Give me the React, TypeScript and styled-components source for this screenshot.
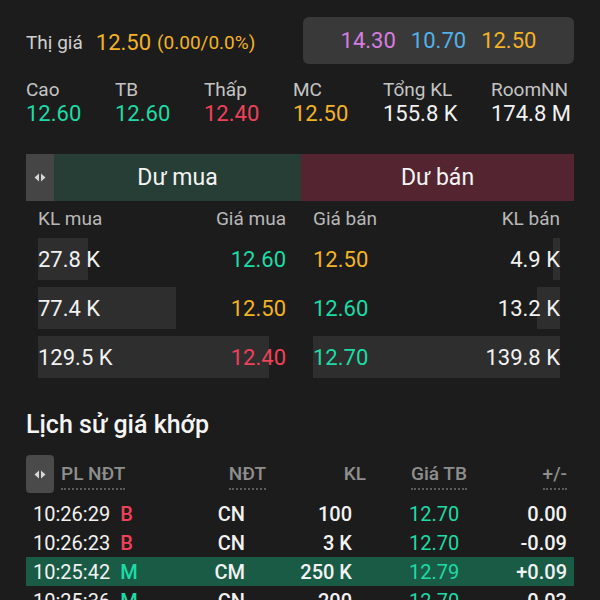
import React from "react";
import styled, { createGlobalStyle } from "styled-components";

const GREEN = "#1ddba6";
const RED = "#ef4159";
const YELLOW = "#f2b326";
const PURPLE = "#d67ee0";
const BLUE = "#52b1ea";
const WHITE = "#f2f2f2";

type Tone = "green" | "red" | "yellow" | "purple" | "blue" | "white";
const tones: Record<Tone, string> = {
	green: GREEN,
	red: RED,
	yellow: YELLOW,
	purple: PURPLE,
	blue: BLUE,
	white: WHITE,
};

const stats: { label: string; value: string; tone: Tone }[] = [
	{ label: "Cao", value: "12.60", tone: "green" },
	{ label: "TB", value: "12.60", tone: "green" },
	{ label: "Thấp", value: "12.40", tone: "red" },
	{ label: "MC", value: "12.50", tone: "yellow" },
	{ label: "Tổng KL", value: "155.8 K", tone: "white" },
	{ label: "RoomNN", value: "174.8 M", tone: "white" },
];

const bids = [
	{ vol: "27.8 K", price: "12.60", tone: "green" as Tone, bar: 50 },
	{ vol: "77.4 K", price: "12.50", tone: "yellow" as Tone, bar: 138 },
	{ vol: "129.5 K", price: "12.40", tone: "red" as Tone, bar: 231 },
];

const asks = [
	{ vol: "4.9 K", price: "12.50", tone: "yellow" as Tone, bar: 7 },
	{ vol: "13.2 K", price: "12.60", tone: "green" as Tone, bar: 23 },
	{ vol: "139.8 K", price: "12.70", tone: "green" as Tone, bar: 247 },
];

const trades = [
	{ time: "10:26:29", side: "B", who: "CN", vol: "100", avg: "12.70", diff: "0.00", hl: false },
	{ time: "10:26:23", side: "B", who: "CN", vol: "3 K", avg: "12.70", diff: "-0.09", hl: false },
	{ time: "10:25:42", side: "M", who: "CM", vol: "250 K", avg: "12.79", diff: "+0.09", hl: true },
	{ time: "10:25:36", side: "M", who: "CN", vol: "200", avg: "12.70", diff: "-0.03", hl: false },
];

function SwapIcon() {
	return (
		<svg width="12" height="9" viewBox="0 0 12 9">
			<path d="M5 0.5 L5 8.5 L0.5 4.5 Z" fill="#d6d6d6" />
			<path d="M7 0.5 L7 8.5 L11.5 4.5 Z" fill="#d6d6d6" />
		</svg>
	);
}

function App() {
	return (
		<>
			<GlobalStyle />
			<Page>
				<TopRow>
					<PriceLabel>Thị giá</PriceLabel>
					<Price>12.50</Price>
					<Change>(0.00/0.0%)</Change>
					<RefBox>
						<Num $tone="purple">14.30</Num>
						<Num $tone="blue">10.70</Num>
						<Num $tone="yellow">12.50</Num>
					</RefBox>
				</TopRow>

				<Stats>
					{stats.map((s) => (
						<Stat key={s.label}>
							<StatLabel>{s.label}</StatLabel>
							<Num $tone={s.tone}>{s.value}</Num>
						</Stat>
					))}
				</Stats>

				<Tabs>
					<TabToggle>
						<SwapIcon />
					</TabToggle>
					<Tab $side="buy">Dư mua</Tab>
					<Tab $side="sell">Dư bán</Tab>
				</Tabs>

				<Book>
					<BookHead>
						<span>KL mua</span>
						<span>Giá mua</span>
					</BookHead>
					<BookHead>
						<span>Giá bán</span>
						<span>KL bán</span>
					</BookHead>
					{bids.map((b, i) => (
						<React.Fragment key={b.vol}>
							<BookRow>
								<Bar $align="left" style={{ width: b.bar }} />
								<Cell>{b.vol}</Cell>
								<Cell $tone={b.tone}>{b.price}</Cell>
							</BookRow>
							<BookRow>
								<Bar $align="right" style={{ width: asks[i].bar }} />
								<Cell $tone={asks[i].tone}>{asks[i].price}</Cell>
								<Cell>{asks[i].vol}</Cell>
							</BookRow>
						</React.Fragment>
					))}
				</Book>

				<SectionTitle>Lịch sử giá khớp</SectionTitle>

				<HistHead>
					<HistToggle>
						<SwapIcon />
					</HistToggle>
					<HeadCell $dotted>PL NĐT</HeadCell>
					<HeadCell $dotted $right>NĐT</HeadCell>
					<HeadCell $right>KL</HeadCell>
					<HeadCell $dotted $pad={45}>Giá TB</HeadCell>
					<HeadCell $dotted $right>+/-</HeadCell>
				</HistHead>

				{trades.map((t) => (
					<TradeRow key={t.time} $hl={t.hl}>
						<TimeCell>
							{t.time}
							<Side $tone={t.side === "B" ? "red" : "green"}>{t.side}</Side>
						</TimeCell>
						<TradeCell $right $bold>{t.who}</TradeCell>
						<TradeCell $right $bold>{t.vol}</TradeCell>
						<TradeCell $tone="green" $pad={57}>{t.avg}</TradeCell>
						<TradeCell $right $bold>{t.diff}</TradeCell>
					</TradeRow>
				))}
			</Page>
		</>
	);
}

export default App;

const GlobalStyle = createGlobalStyle`
	html, body {
		margin: 0;
		background: #1c1c1c;
		height: 600px;
		overflow: hidden;
	}
	body {
		font-family: Roboto, "Noto Sans", sans-serif;
		color: ${WHITE};
	}
`;

const Page = styled.div`
	padding: 17px 26px 0;
	width: 548px;
`;

const TopRow = styled.div`
	display: flex;
	align-items: center;
	height: 47px;
`;

const PriceLabel = styled.span`
	font-size: 19px;
	color: #cfcfcf;
	margin-right: 13px;
	margin-top: 3px;
`;

const Price = styled.span`
	font-size: 22px;
	color: ${YELLOW};
	margin-right: 6px;
	margin-top: 3px;
`;

const Change = styled.span`
	font-size: 19px;
	color: ${YELLOW};
	margin-top: 4px;
`;

const RefBox = styled.div`
	margin-left: auto;
	width: 271px;
	height: 47px;
	box-sizing: border-box;
	border-radius: 6px;
	background: #393939;
	display: flex;
	align-items: center;
	justify-content: center;
	gap: 15px;
	font-size: 22px;
`;

const Num = styled.span<{ $tone: Tone }>`
	color: ${(p) => tones[p.$tone]};
`;

const Stats = styled.div`
	display: grid;
	grid-template-columns: 89px 89px 89px 90px 108px auto;
	margin-top: 15px;
	height: 75px;
`;

const Stat = styled.div`
	display: flex;
	flex-direction: column;
	font-size: 22px;
	line-height: 26px;
	white-space: nowrap;
`;

const StatLabel = styled.span`
	font-size: 19px;
	line-height: 22px;
	color: #c4c4c4;
`;

const Tabs = styled.div`
	display: grid;
	grid-template-columns: 28px 247px 1fr;
	height: 47px;
`;

const TabToggle = styled.div`
	background: #454545;
	display: flex;
	align-items: center;
	justify-content: center;
`;

const Tab = styled.div<{ $side: "buy" | "sell" }>`
	background: ${(p) => (p.$side === "buy" ? "#263e35" : "#552431")};
	display: flex;
	align-items: center;
	justify-content: center;
	font-size: 23px;
	color: #f4f4f4;
`;

const Book = styled.div`
	display: grid;
	grid-template-columns: 248px 247px;
	column-gap: 27px;
	row-gap: 7px;
	padding: 0 14px 0 12px;
`;

const BookHead = styled.div`
	display: flex;
	justify-content: space-between;
	font-size: 19px;
	color: #b8b8b8;
	height: 25px;
	align-items: center;
	margin-top: 5px;
`;

const BookRow = styled.div`
	position: relative;
	height: 42px;
	display: flex;
	align-items: center;
	justify-content: space-between;
	font-size: 22px;
`;

const Bar = styled.div<{ $align: "left" | "right" }>`
	position: absolute;
	top: 0;
	bottom: 0;
	${(p) => p.$align}: 0;
	background: #2e2e2e;
`;

const Cell = styled.span<{ $tone?: Tone }>`
	position: relative;
	color: ${(p) => (p.$tone ? tones[p.$tone] : WHITE)};
`;

const SectionTitle = styled.div`
	font-size: 25px;
	font-weight: 500;
	line-height: 28px;
	margin-top: 33px;
	color: #f4f4f4;
`;

const HistHead = styled.div`
	display: grid;
	grid-template-columns: 28px 176px 36px 100px 114px 1fr;
	align-items: center;
	height: 38px;
	margin-top: 16px;
	padding-right: 7px;
	margin-bottom: 6px;
`;

const HistToggle = styled.div`
	height: 38px;
	border-radius: 4px;
	background: #4a4a4a;
	display: flex;
	align-items: center;
	justify-content: center;
`;

const HeadCell = styled.div<{ $dotted?: boolean; $right?: boolean; $pad?: number }>`
	font-size: 19px;
	font-weight: 500;
	color: #8e8e8e;
	white-space: nowrap;
	justify-self: ${(p) => (p.$right ? "end" : "start")};
	margin-left: ${(p) => (p.$pad ? p.$pad : p.$right ? 0 : 7)}px;
	padding-bottom: 3px;
	border-bottom: 2px dotted ${(p) => (p.$dotted ? "#5c5c5c" : "transparent")};
	margin-top: 4px;
`;

const TradeRow = styled.div<{ $hl: boolean }>`
	display: grid;
	grid-template-columns: 167px 45px 107px 128px 1fr;
	align-items: center;
	height: 29px;
	padding: 0 7px;
	font-size: 20px;
	background: ${(p) => (p.$hl ? "#1a5b46" : "transparent")};
`;

const TimeCell = styled.div`
	display: flex;
	gap: 10px;
	white-space: nowrap;
`;

const Side = styled.span<{ $tone: Tone }>`
	color: ${(p) => tones[p.$tone]};
	font-weight: 500;
`;

const TradeCell = styled.div<{ $right?: boolean; $bold?: boolean; $tone?: Tone; $pad?: number }>`
	text-align: ${(p) => (p.$right ? "right" : "left")};
	font-weight: ${(p) => (p.$bold ? 500 : 400)};
	color: ${(p) => (p.$tone ? tones[p.$tone] : WHITE)};
	padding-left: ${(p) => p.$pad ?? 0}px;
	white-space: nowrap;
`;
